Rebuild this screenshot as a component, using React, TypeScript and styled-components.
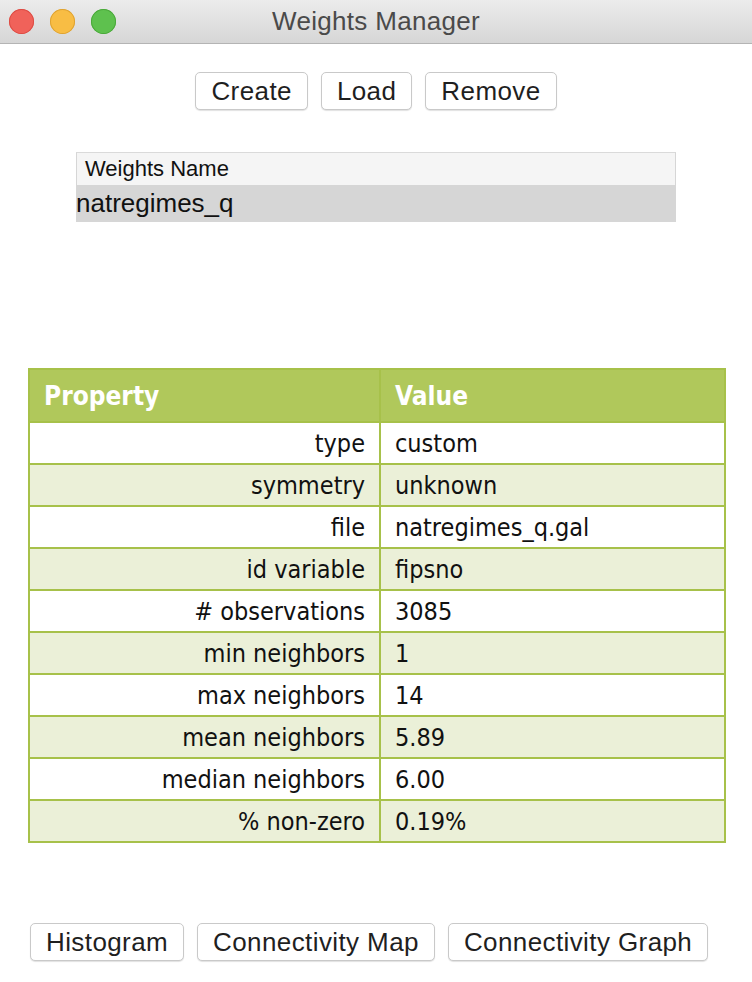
import styled, { createGlobalStyle } from 'styled-components'
import { FC } from 'react'

const GlobalStyle = createGlobalStyle`
  html, body {
    margin: 0;
    padding: 0;
    background: #ffffff;
  }
`

const Window = styled.div`
  width: 752px;
  height: 982px;
  background: #ffffff;
  display: flex;
  flex-direction: column;
  font-family: 'Liberation Sans', Arial, sans-serif;
  overflow: hidden;
`

const TitleBar = styled.div`
  height: 43px;
  display: flex;
  align-items: center;
  position: relative;
  background: linear-gradient(#ececec, #d6d6d6);
  border-bottom: 1px solid #b4b4b4;
`

const Lights = styled.div`
  display: flex;
  gap: 16px;
  padding-left: 9px;
`

const Light = styled.span<{ $fill: string; $edge: string }>`
  width: 25px;
  height: 25px;
  border-radius: 50%;
  background: ${p => p.$fill};
  box-shadow: inset 0 0 0 1px ${p => p.$edge};
`

const Title = styled.div`
  position: absolute;
  left: 0;
  right: 0;
  text-align: center;
  font-size: 26px;
  letter-spacing: 0.3px;
  color: #4a4a4a;
  pointer-events: none;
`

const ButtonRow = styled.div<{ $top: number; $left?: number }>`
  display: flex;
  gap: 13px;
  margin-top: ${p => p.$top}px;
  ${p => (p.$left !== undefined ? `padding-left: ${p.$left}px;` : 'justify-content: center;')}
`

const Button = styled.button`
  height: 38px;
  padding: 0 15px;
  background: #ffffff;
  border: 1px solid #c9c9c9;
  border-radius: 5px;
  box-shadow: 0 1px 1px rgba(0, 0, 0, 0.12);
  font-family: 'Liberation Sans', Arial, sans-serif;
  font-size: 26px;
  letter-spacing: 0.4px;
  color: #1f1f1f;
`

const List = styled.div`
  width: 600px;
  margin: 42px 0 0 76px;
`

const ListHeader = styled.div`
  height: 33px;
  background: #f5f5f5;
  border-top: 1px solid #dadada;
  display: flex;
  align-items: center;
  font-size: 22px;
  color: #111;
  border-left: 1px solid #d6d6d6;
  border-right: 1px solid #d6d6d6;
  padding-left: 8px;
  box-sizing: border-box;
`

const ListRow = styled.div`
  height: 37px;
  background: #d6d6d6;
  display: flex;
  align-items: center;
  font-size: 26px;
  color: #111;
`

const Table = styled.table`
  width: 698px;
  margin: 146px 0 0 28px;
  border-collapse: collapse;
  border: 2px solid #a7c14a;
  font-family: 'DejaVu Sans Condensed', 'DejaVu Sans', sans-serif;
  table-layout: fixed;
`

const HeadCell = styled.th<{ $w?: number }>`
  height: 51px;
  ${p => (p.$w ? `width: ${p.$w}px;` : '')}
  background: #b0c85b;
  color: #ffffff;
  font-size: 26px;
  font-weight: bold;
  text-align: left;
  padding: 0 14px;
  border: 2px solid #a7c14a;
`

const Row = styled.tr<{ $alt: boolean }>`
  background: ${p => (p.$alt ? '#ebf0d8' : '#ffffff')};
`

const Cell = styled.td<{ $right?: boolean }>`
  height: 40px;
  padding: 0 14px;
  font-size: 25px;
  color: #111;
  text-align: ${p => (p.$right ? 'right' : 'left')};
  border: 2px solid #a7c14a;
`

const rows: [string, string][] = [
    ['type', 'custom'],
    ['symmetry', 'unknown'],
    ['file', 'natregimes_q.gal'],
    ['id variable', 'fipsno'],
    ['# observations', '3085'],
    ['min neighbors', '1'],
    ['max neighbors', '14'],
    ['mean neighbors', '5.89'],
    ['median neighbors', '6.00'],
    ['% non-zero', '0.19%']
]

const App: FC = () => {
    return (
        <Window>
            <GlobalStyle />
            <TitleBar>
                <Lights>
                    <Light $fill={'#f0625a'} $edge={'#dc4c44'} />
                    <Light $fill={'#f8bd44'} $edge={'#dea232'} />
                    <Light $fill={'#5ec14e'} $edge={'#4aa83a'} />
                </Lights>
                <Title>Weights Manager</Title>
            </TitleBar>
            <ButtonRow $top={28}>
                <Button>Create</Button>
                <Button>Load</Button>
                <Button>Remove</Button>
            </ButtonRow>
            <List>
                <ListHeader>Weights Name</ListHeader>
                <ListRow>natregimes_q</ListRow>
            </List>
            <Table>
                <thead>
                    <tr>
                        <HeadCell $w={321}>Property</HeadCell>
                        <HeadCell>Value</HeadCell>
                    </tr>
                </thead>
                <tbody>
                    {rows.map(([k, v], i) => (
                        <Row key={k} $alt={i % 2 === 1}>
                            <Cell $right>{k}</Cell>
                            <Cell>{v}</Cell>
                        </Row>
                    ))}
                </tbody>
            </Table>
            <ButtonRow $top={80} $left={30}>
                <Button>Histogram</Button>
                <Button>Connectivity Map</Button>
                <Button>Connectivity Graph</Button>
            </ButtonRow>
        </Window>
    )
}

export default App
